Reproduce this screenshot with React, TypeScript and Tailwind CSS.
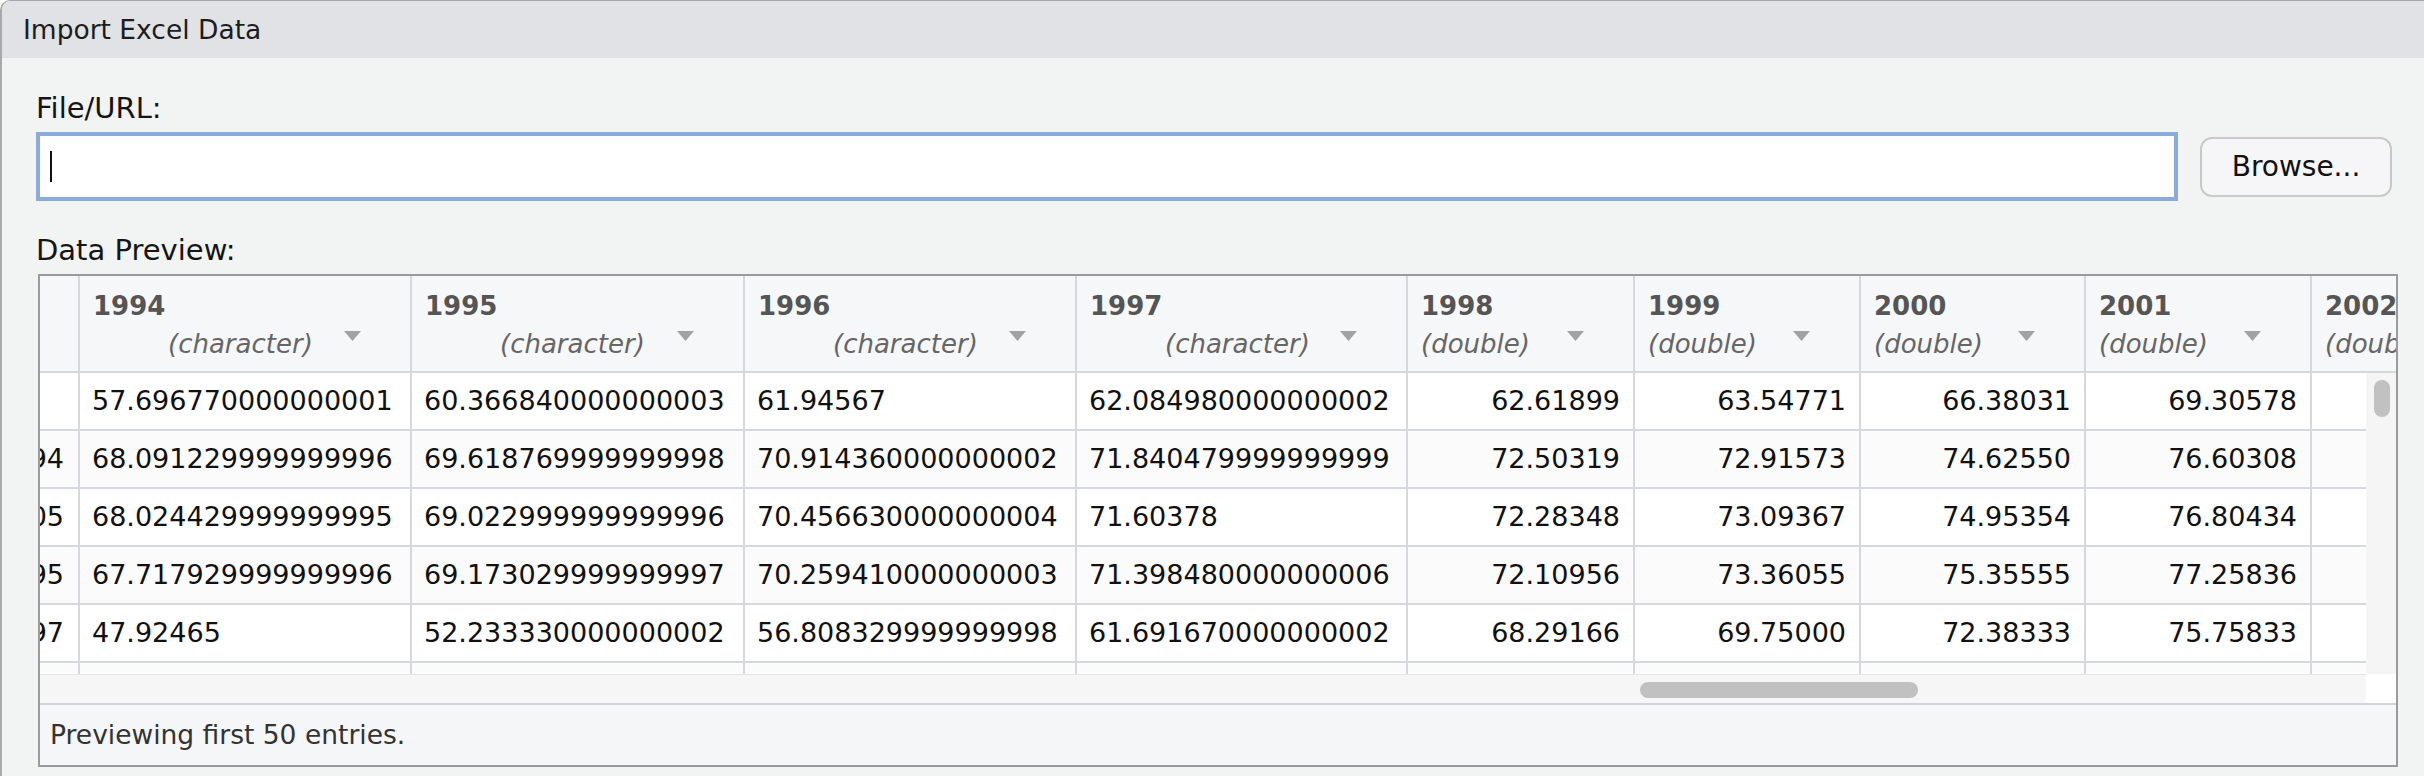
type Col = {
  width: string;
  year?: string;
  type?: 'character' | 'double';
};

const columns: Col[] = [
  { width: 'w-[40px]' },
  { width: 'w-[332px]', year: '1994', type: 'character' },
  { width: 'w-[333px]', year: '1995', type: 'character' },
  { width: 'w-[332px]', year: '1996', type: 'character' },
  { width: 'w-[331px]', year: '1997', type: 'character' },
  { width: 'w-[227px]', year: '1998', type: 'double' },
  { width: 'w-[226px]', year: '1999', type: 'double' },
  { width: 'w-[225px]', year: '2000', type: 'double' },
  { width: 'w-[226px]', year: '2001', type: 'double' },
  { width: 'w-[230px]', year: '2002', type: 'double' },
];

const rows: string[][] = [
  ['', '57.696770000000001', '60.366840000000003', '61.94567', '62.084980000000002', '62.61899', '63.54771', '66.38031', '69.30578', ''],
  ['1994', '68.091229999999996', '69.618769999999998', '70.914360000000002', '71.840479999999999', '72.50319', '72.91573', '74.62550', '76.60308', ''],
  ['2005', '68.024429999999995', '69.022999999999996', '70.456630000000004', '71.60378', '72.28348', '73.09367', '74.95354', '76.80434', ''],
  ['1995', '67.717929999999996', '69.173029999999997', '70.259410000000003', '71.398480000000006', '72.10956', '73.36055', '75.35555', '77.25836', ''],
  ['1997', '47.92465', '52.233330000000002', '56.808329999999998', '61.691670000000002', '68.29166', '69.75000', '72.38333', '75.75833', ''],
  ['', '', '', '', '', '', '', '', '', ''],
];

function SortArrow() {
  return (
    <svg width="17" height="10" viewBox="0 0 17 10" className="ml-auto mr-[49px] mt-[2px] self-start shrink-0">
      <polygon points="0,0 17,0 8.5,10" fill="#a2a2a2" />
    </svg>
  );
}

function HeaderCell({ col }: { col: Col }) {
  return (
    <div className={`${col.width} shrink-0 h-full border-r-2 border-[#d5d8dc] flex flex-col`}>
      {col.year && (
        <>
          <div className="pt-[15px] pl-[13px] leading-[30px] text-[26px] font-bold text-[#555555] whitespace-nowrap">
            {col.year}
          </div>
          <div className="mt-[8px] flex items-start">
            <span
              className={`${col.type === 'character' ? 'pl-[88px]' : 'pl-[13px]'} leading-[30px] text-[26px] italic text-[#666666] whitespace-nowrap`}
            >
              ({col.type})
            </span>
            <SortArrow />
          </div>
        </>
      )}
    </div>
  );
}

function DataCell({ col, index, value }: { col: Col; index: number; value: string }) {
  const align =
    index === 0 ? 'justify-end pr-[14px]' : col.type === 'character' ? 'justify-start pl-[12px]' : 'justify-end pr-[13px]';
  return (
    <div className={`${col.width} shrink-0 h-full border-r-2 border-[#d5d8dc] flex items-center overflow-hidden ${align}`}>
      <span className="whitespace-nowrap text-[27px] text-[#111111]">{value}</span>
    </div>
  );
}

export default function App() {
  return (
    <div className="w-[2424px] h-[776px] overflow-hidden bg-[#f2f3f3] border-l-2 border-t border-[#a9a9a9] rounded-tl-[10px] font-['DejaVu_Sans',sans-serif] flex flex-col">
      <div className="h-[57px] shrink-0 bg-[#e1e2e6] flex items-center pl-[21px] text-[26.5px] text-[#1c1c1c]">
        Import Excel Data
      </div>

      <div className="pl-[34px] pr-[32px] flex flex-col">
        <div className="mt-[34px] text-[29px] leading-[32px] text-[#151515]">File/URL:</div>
        <div className="mt-[8px] flex items-center gap-[22px]">
          <div className="flex-1 h-[69px] border-4 border-[#8aabdb] bg-white flex items-center">
            <span className="ml-[10px] w-[2px] h-[31px] bg-[#111111]" />
          </div>
          <button className="w-[192px] h-[60px] shrink-0 rounded-[12px] border-2 border-[#c9c9c9] bg-[#f6f6f8] text-[28px] text-[#111111]">
            Browse...
          </button>
        </div>

        <div className="mt-[33px] text-[29px] leading-[32px] text-[#151515]">Data Preview:</div>

        <div className="mt-[8px] ml-[2px] w-[2360px] h-[493px] border-2 border-[#9b9b9b] flex flex-col overflow-hidden">
          <div className="h-[97px] shrink-0 bg-[#f6f7f8] border-b-2 border-[#d5d8dc] flex overflow-hidden">
            {columns.map((col, i) => (
              <HeaderCell key={i} col={col} />
            ))}
          </div>

          <div className="h-[330px] shrink-0 flex">
            <div className="w-[2326px] shrink-0 flex flex-col">
              <div className="h-[301px] shrink-0 overflow-hidden bg-white">
                {rows.map((row, r) => (
                  <div
                    key={r}
                    className={`h-[58px] flex border-b-2 border-[#d5d8dc] ${r % 2 === 1 ? 'bg-[#fbfbfb]' : 'bg-white'}`}
                  >
                    {columns.map((col, i) => (
                      <DataCell key={i} col={col} index={i} value={row[i]} />
                    ))}
                  </div>
                ))}
              </div>
              <div className="h-[29px] shrink-0 bg-[#f6f6f6] border-t border-[#e6e6e6] flex items-center">
                <div className="ml-[1600px] mt-[2px] w-[278px] h-[16px] rounded-full bg-[#c1c1c1]" />
              </div>
            </div>
            <div className="w-[30px] shrink-0 flex flex-col">
              <div className="h-[301px] shrink-0 bg-[#f5f5f5] pt-[7px] pl-[8px]">
                <div className="w-[16px] h-[37px] rounded-full bg-[#c1c1c1]" />
              </div>
              <div className="h-[29px] shrink-0 bg-white" />
            </div>
          </div>

          <div className="h-[62px] shrink-0 border-t-2 border-[#d0d4d8] bg-[#f5f6f7] flex items-center pl-[10px] text-[26.5px] text-[#333333]">
            Previewing first 50 entries.
          </div>
        </div>
      </div>
    </div>
  );
}
